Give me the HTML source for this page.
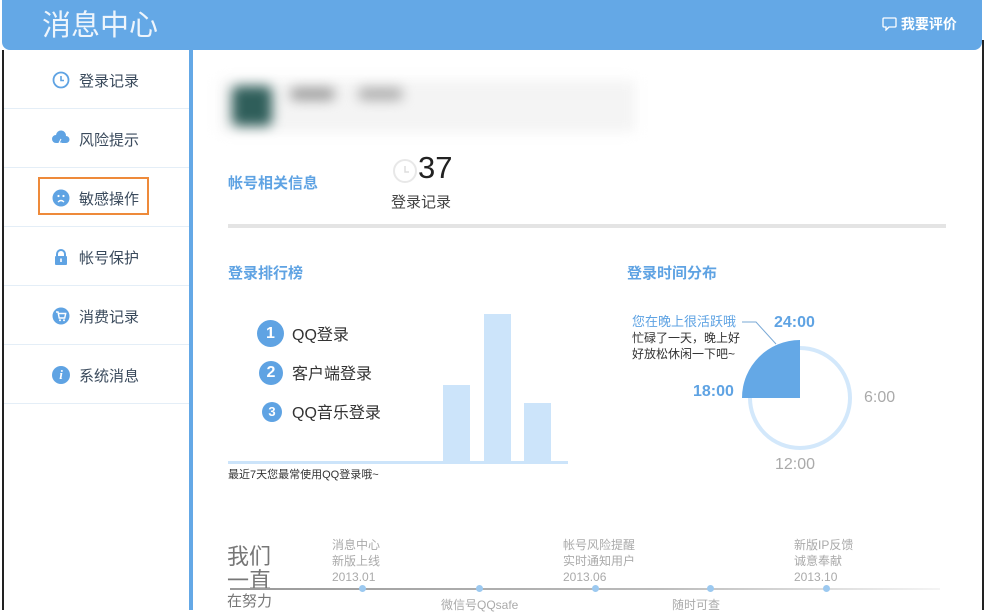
<!DOCTYPE html>
<html><head><meta charset="utf-8"><style>
*{margin:0;padding:0;box-sizing:border-box}
body{width:986px;height:610px;overflow:hidden;background:#fff;font-family:"Liberation Sans","Microsoft YaHei","Noto Sans CJK SC",sans-serif;position:relative}
.a{position:absolute}
.hdr{left:2px;top:0;width:980px;height:50px;background:#64a8e6;border-radius:0 0 8px 8px}
.nav{left:2px;top:50px;width:187px;height:560px;border-left:2px solid #222;background:#fff}
.it{position:absolute;left:0;width:187px;height:59px;border-bottom:1px solid #e4eef7;font-size:15px;color:#3a4a5c}
.it span{position:absolute;left:75px;top:20px}
.ic{position:absolute;left:48px;top:21px;width:18px;height:18px}
.blur{filter:blur(6px)}
.n{position:absolute;width:24px;height:24px;border-radius:50%;background:#5fa3e3;color:#fff;font-weight:bold;font-size:16px;text-align:center;line-height:24px}
.li{position:absolute;font-size:16px;color:#333}
.tl{font-size:12px;color:#aaa;line-height:16px}
</style></head><body>
<div class="a hdr"></div>
<div class="a" style="left:42px;top:2px;font-size:29px;color:#eef5fc">消息中心</div>
<div class="a" style="left:882px;top:14px;font-size:14px;color:#fff;font-weight:bold">
<svg width="15" height="14" style="vertical-align:-2px" viewBox="0 0 15 14"><path d="M2 1h11a1 1 0 0 1 1 1v7a1 1 0 0 1-1 1H7l-3 3v-3H2a1 1 0 0 1-1-1V2a1 1 0 0 1 1-1z" fill="none" stroke="#fff" stroke-width="1.3"/></svg> 我要评价</div>
<div class="a" style="left:982px;top:40px;width:2px;height:570px;background:#222"></div>
<div class="a nav">
<div class="it" style="top:0"><svg class="ic" viewBox="0 0 18 18"><circle cx="9" cy="9" r="7.5" fill="none" stroke="#5fa3e3" stroke-width="1.8"/><path d="M9 5v4.5h3" fill="none" stroke="#5fa3e3" stroke-width="1.6"/></svg><span>登录记录</span></div>
<div class="it" style="top:59px"><svg class="ic" viewBox="0 0 18 18"><path d="M4 13a4 4 0 0 1 0-8 5 5 0 0 1 10 1 3.5 3.5 0 0 1 0 7z" fill="#5fa3e3"/><path d="M9 9l-2 4h2l-1 4" stroke="#fff" fill="none"/></svg><span>风险提示</span></div>
<div class="it" style="top:118px"><svg class="ic" viewBox="0 0 18 18"><circle cx="9" cy="9" r="8.5" fill="#5fa3e3"/><circle cx="6.5" cy="7" r="1.1" fill="#fff"/><circle cx="11.5" cy="7" r="1.1" fill="#fff"/><path d="M6 13q3-3 6 0" stroke="#fff" fill="none" stroke-width="1.3"/></svg><span>敏感操作</span></div>
<div class="it" style="top:177px"><svg class="ic" viewBox="0 0 18 18"><path d="M5 8V6a4 4 0 0 1 8 0v2" fill="none" stroke="#5fa3e3" stroke-width="2"/><rect x="3" y="8" width="12" height="9" rx="1" fill="#5fa3e3"/><rect x="8.2" y="10.5" width="1.6" height="3.5" fill="#fff"/></svg><span>帐号保护</span></div>
<div class="it" style="top:236px"><svg class="ic" viewBox="0 0 18 18"><circle cx="9" cy="9" r="8.5" fill="#5fa3e3"/><path d="M4 5h2l1.2 6h5.5l1-4.5H6.5" stroke="#fff" fill="none" stroke-width="1.4"/><circle cx="8" cy="13.3" r="1" fill="#fff"/><circle cx="12" cy="13.3" r="1" fill="#fff"/></svg><span>消费记录</span></div>
<div class="it" style="top:295px"><div class="ic" style="border-radius:50%;background:#5fa3e3;color:#fff;font-style:italic;font-weight:bold;font-size:13px;text-align:center;line-height:18px;font-family:'Liberation Serif',serif">i</div><span>系统消息</span></div>
</div>
<div class="a" style="left:38px;top:177px;width:111px;height:38px;border:2px solid #ee8a3a"></div>
<div class="a" style="left:189px;top:50px;width:4px;height:560px;background:#64a8e6"></div>
<div class="a blur" style="left:220px;top:80px;width:415px;height:52px;background:#f4f4f4"></div>
<div class="a blur" style="left:232px;top:86px;width:40px;height:40px;background:#2f5e5a;border-radius:6px"></div>
<div class="a blur" style="left:290px;top:88px;width:45px;height:12px;background:#999;border-radius:6px"></div>
<div class="a blur" style="left:358px;top:88px;width:45px;height:12px;background:#aaa;border-radius:6px"></div>
<div class="a" style="left:228px;top:172px;font-size:15px;color:#5fa3e3;font-weight:bold">帐号相关信息</div>
<svg class="a" style="left:392px;top:158px" width="26" height="26"><circle cx="13" cy="13" r="11" fill="none" stroke="#e8e8e8" stroke-width="2"/><path d="M13 8v6h4" fill="none" stroke="#ddd" stroke-width="1.5"/></svg>
<div class="a" style="left:418px;top:150px;font-size:31px;color:#222">37</div>
<div class="a" style="left:391px;top:191px;font-size:15px;color:#444">登录记录</div>
<div class="a" style="left:228px;top:224px;width:718px;height:4px;background:#e4e4e4"></div>
<div class="a" style="left:228px;top:262px;font-size:15px;color:#5fa3e3;font-weight:bold">登录排行榜</div>
<div class="a" style="left:627px;top:262px;font-size:15px;color:#5fa3e3;font-weight:bold">登录时间分布</div>
<div class="n" style="left:257px;top:320px;width:27px;height:27px;line-height:27px">1</div><div class="li" style="left:292px;top:321px">QQ登录</div>
<div class="n" style="left:259px;top:361px">2</div><div class="li" style="left:292px;top:360px">客户端登录</div>
<div class="n" style="left:262px;top:402px;width:20px;height:20px;line-height:20px;font-size:13px">3</div><div class="li" style="left:292px;top:399px">QQ音乐登录</div>
<div class="a" style="left:443px;top:385px;width:27px;height:77px;background:#cce4fa"></div>
<div class="a" style="left:484px;top:314px;width:27px;height:148px;background:#cce4fa"></div>
<div class="a" style="left:524px;top:403px;width:27px;height:59px;background:#cce4fa"></div>
<div class="a" style="left:228px;top:461px;width:340px;height:3px;background:#cce4fa"></div>
<div class="a" style="left:228px;top:466px;font-size:11px;color:#333">最近7天您最常使用QQ登录哦~</div>
<svg class="a" style="left:600px;top:290px" width="320" height="200">
<circle cx="200" cy="108" r="50" fill="none" stroke="#d3e8fb" stroke-width="4"/>
<path d="M200 108V50A58 58 0 0 0 142 108z" fill="#64a8e6"/>
<path d="M142 32h14l20 22" fill="none" stroke="#7aa9d6" stroke-width="1"/>
</svg>
<div class="a" style="left:632px;top:311px;font-size:13px;color:#5fa3e3">您在晚上很活跃哦</div>
<div class="a" style="left:632px;top:330px;font-size:12px;color:#333;line-height:16px">忙碌了一天，晚上好<br>好放松休闲一下吧~</div>
<div class="a" style="left:774px;top:314px;font-size:16px;color:#5fa3e3;font-weight:bold">24:00</div>
<div class="a" style="left:693px;top:383px;font-size:16px;color:#5fa3e3;font-weight:bold">18:00</div>
<div class="a" style="left:864px;top:389px;font-size:16px;color:#aaa">6:00</div>
<div class="a" style="left:775px;top:456px;font-size:16px;color:#aaa">12:00</div>
<div class="a" style="left:227px;top:545px;font-size:22px;color:#777;line-height:24px">我们<br>一直</div>
<div class="a" style="left:227px;top:590px;font-size:15px;color:#777">在努力</div>
<div class="a" style="left:230px;top:588px;width:710px;height:2px;background:linear-gradient(90deg,#999,#bbb 60%,#f4f4f4)"></div>
<div class="a tl" style="left:332px;top:537px">消息中心<br>新版上线<br>2013.01</div>
<div class="a tl" style="left:563px;top:537px">帐号风险提醒<br>实时通知用户<br>2013.06</div>
<div class="a tl" style="left:794px;top:537px">新版IP反馈<br>诚意奉献<br>2013.10</div>
<div class="a tl" style="left:441px;top:597px">微信号QQsafe</div>
<div class="a tl" style="left:672px;top:597px">随时可查</div>
<div class="a" style="left:359px;top:585px;width:7px;height:7px;border-radius:50%;background:#9cc9f0"></div>
<div class="a" style="left:476px;top:585px;width:7px;height:7px;border-radius:50%;background:#9cc9f0"></div>
<div class="a" style="left:592px;top:585px;width:7px;height:7px;border-radius:50%;background:#9cc9f0"></div>
<div class="a" style="left:707px;top:585px;width:7px;height:7px;border-radius:50%;background:#9cc9f0"></div>
<div class="a" style="left:823px;top:585px;width:7px;height:7px;border-radius:50%;background:#9cc9f0"></div>
</body></html>
